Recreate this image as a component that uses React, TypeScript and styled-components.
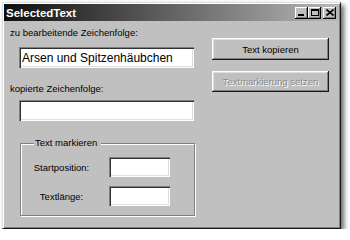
import React from "react";
import styled, { createGlobalStyle } from "styled-components";

const GlobalStyle = createGlobalStyle`
  html, body {
    margin: 0;
    padding: 0;
    background: #ffffff;
  }
  body {
    font-family: "Liberation Sans", Arial, sans-serif;
  }
`;

const Window = styled.div`
  box-sizing: border-box;
  margin: 2px 0 0 2px;
  width: 339px;
  height: 227px;
  background: #c0c0c0;
  border: 1px solid;
  border-color: #dfdfdf #1a1a1a #1a1a1a #dfdfdf;
  box-shadow: inset 1px 1px 0 #ffffff, inset -1px -1px 0 #808080,
    3px 3px 5px rgba(0, 0, 0, 0.6);
  padding: 1px;
  display: flex;
  flex-direction: column;
`;

const TitleBar = styled.div`
  height: 17px;
  display: flex;
  align-items: center;
  padding: 0 3px 0 2px;
  background: linear-gradient(to right, #0e0e0e, #b8b8b8);
`;

const Title = styled.span`
  flex: 1;
  color: #ffffff;
  font-weight: bold;
  font-size: 11.5px;
`;

const Controls = styled.div`
  display: flex;
  align-items: center;
`;

const CtrlButton = styled.div<{ $gap?: number }>`
  box-sizing: border-box;
  width: 13px;
  height: 12px;
  margin-left: ${(p) => p.$gap ?? 0}px;
  background: #c0c0c0;
  box-shadow: inset -1px -1px 0 #000000, inset 1px 1px 0 #ffffff,
    inset -2px -2px 0 #808080;
  display: flex;
  align-items: center;
  justify-content: center;
  svg {
    display: block;
  }
`;

const Body = styled.div`
  flex: 1;
  display: grid;
  grid-template-columns: 184px 117px;
  column-gap: 18px;
  padding-left: 6px;
`;

const LeftColumn = styled.div`
  display: flex;
  flex-direction: column;
`;

const RightColumn = styled.div`
  display: flex;
  flex-direction: column;
  gap: 11px;
  padding-top: 17px;
`;

const Label = styled.div<{ $top: number }>`
  font-size: 9.5px;
  line-height: 12px;
  height: 12px;
  color: #000000;
  margin-top: ${(p) => p.$top}px;
  white-space: nowrap;
`;

const TextBox = styled.input<{ $w: number; $h: number; $top?: number; $left?: number; $size?: number }>`
  box-sizing: border-box;
  width: ${(p) => p.$w}px;
  height: ${(p) => p.$h}px;
  margin: ${(p) => p.$top ?? 0}px 0 0 ${(p) => p.$left ?? 0}px;
  padding: 0 3px;
  border: none;
  outline: none;
  background: #ffffff;
  font-family: "Liberation Sans", Arial, sans-serif;
  font-size: ${(p) => p.$size ?? 9.5}px;
  color: #000000;
  box-shadow: inset 1px 1px 0 #808080, inset 2px 2px 0 #303030,
    inset -1px -1px 0 #ffffff, inset -2px -2px 0 #dfdfdf;
`;

const Group = styled.fieldset`
  box-sizing: border-box;
  width: 175px;
  margin: 16px 0 0 10px;
  padding: 8px 0 9px 8px;
  border: 1px solid #808080;
  box-shadow: inset 1px 1px 0 #ffffff, 1px 1px 0 #ffffff;
  display: grid;
  grid-template-columns: 65px 61px;
  column-gap: 15px;
  row-gap: 9px;
  align-items: center;
`;

const Legend = styled.legend`
  font-size: 9.5px;
  line-height: 12px;
  padding: 0 4px 0 1px;
  margin-left: 5px;
  background: #c0c0c0;
  color: #000000;
`;

const FieldLabel = styled.label`
  font-size: 9.5px;
  text-align: center;
  color: #000000;
  white-space: nowrap;
`;

const Button = styled.button<{ $h: number }>`
  box-sizing: border-box;
  width: 117px;
  height: ${(p) => p.$h}px;
  padding: 0;
  border: none;
  background: #c0c0c0;
  font-family: "Liberation Sans", Arial, sans-serif;
  font-size: 9.5px;
  color: #000000;
  box-shadow: inset -1px -1px 0 #1a1a1a, inset 1px 1px 0 #ffffff,
    inset -2px -2px 0 #808080, inset 2px 2px 0 #dfdfdf;
  &:disabled {
    color: #8a8a8a;
    text-shadow: 1px 1px 0 #ffffff;
  }
`;

export default function App() {
  return (
    <>
      <GlobalStyle />
      <Window>
        <TitleBar>
          <Title>SelectedText</Title>
          <Controls>
            <CtrlButton>
              <svg width="7" height="7" viewBox="0 0 7 7">
                <rect x="0" y="5" width="6" height="2" fill="#000" />
              </svg>
            </CtrlButton>
            <CtrlButton>
              <svg width="8" height="7" viewBox="0 0 8 7">
                <rect x="0.5" y="0.5" width="7" height="6" fill="none" stroke="#000" />
                <rect x="0" y="0" width="8" height="2" fill="#000" />
              </svg>
            </CtrlButton>
            <CtrlButton $gap={2}>
              <svg width="8" height="7" viewBox="0 0 8 7">
                <path d="M0.5 0.5 L7.5 6.5 M7.5 0.5 L0.5 6.5" stroke="#000" strokeWidth="1.6" />
              </svg>
            </CtrlButton>
          </Controls>
        </TitleBar>
        <Body>
          <LeftColumn>
            <Label $top={6}>zu bearbeitende Zeichenfolge:</Label>
            <TextBox
              $w={175}
              $h={21}
              $top={8}
              $left={9}
              $size={12}
              defaultValue="Arsen und Spitzenhäubchen"
            />
            <Label $top={15}>kopierte Zeichenfolge:</Label>
            <TextBox $w={175} $h={21} $top={5} $left={9} defaultValue="" />
            <Group>
              <Legend>Text markieren</Legend>
              <FieldLabel>Startposition:</FieldLabel>
              <TextBox $w={61} $h={20} defaultValue="" />
              <FieldLabel>Textlänge:</FieldLabel>
              <TextBox $w={61} $h={20} defaultValue="" />
            </Group>
          </LeftColumn>
          <RightColumn>
            <Button $h={22}>Text kopieren</Button>
            <Button $h={21} disabled>
              Textmarkierung setzen
            </Button>
          </RightColumn>
        </Body>
      </Window>
    </>
  );
}
